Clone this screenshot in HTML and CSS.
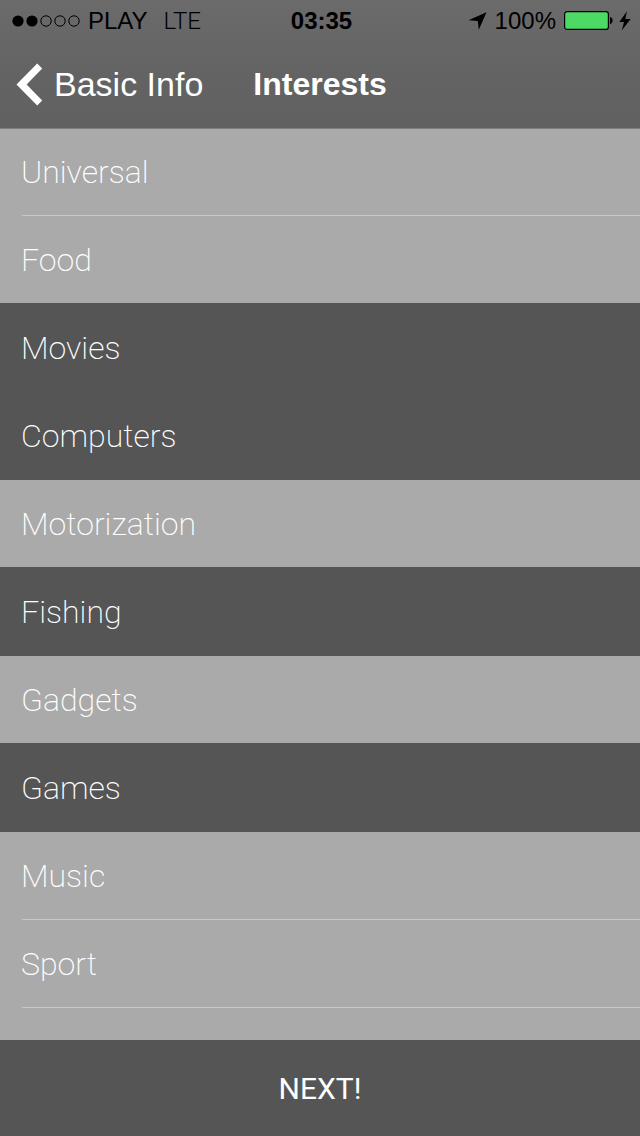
FILE: index.html
```html
<!DOCTYPE html>
<html lang="en">
<head>
    <meta charset="UTF-8">
    <meta name="viewport" content="width=device-width, initial-scale=1.0">
    <title>Interests</title>
    <link rel="stylesheet" href="styles.css">
</head>
<body>
    <header class="top">
        <div class="status-bar">
            <div class="status-left">
                <svg class="signal" width="68" height="12" viewBox="0 0 68 12" aria-hidden="true">
                    <circle cx="6" cy="6" r="5.6"/>
                    <circle cx="20" cy="6" r="5.6"/>
                    <g fill="none" stroke="#000">
                        <circle cx="34" cy="6" r="5.2"/>
                        <circle cx="48" cy="6" r="5.2"/>
                        <circle cx="62" cy="6" r="5.2"/>
                    </g>
                </svg>
                <span>PLAY</span>
                <span class="network">LTE</span>
            </div>
            <span class="clock">03:35</span>
            <div class="status-right">
                <svg class="location" width="19" height="18" viewBox="0 0 19 18" aria-hidden="true">
                    <path d="M18.5 0.3 L0.5 8.2 L9.8 9 L10.8 17.8 Z"/>
                </svg>
                <span>100%</span>
                <svg class="battery" width="49" height="19" viewBox="0 0 49 19" aria-hidden="true">
                    <rect x="0.6" y="0.6" width="43.8" height="17.8" rx="2.5" fill="#4cd964" stroke="#000" stroke-width="1.2"/>
                    <path d="M46 6 C49.5 6.5 49.5 12.5 46 13 Z"/>
                </svg>
                <svg class="bolt" width="12" height="20" viewBox="0 0 12 20" aria-hidden="true">
                    <path d="M8 0.3 L0.3 11 H5 L2.8 19.5 L11.6 8 H6.3 Z"/>
                </svg>
            </div>
        </div>
        <nav class="nav-bar">
            <a class="back" href="#">
                <svg width="27" height="44" viewBox="0 0 27 44" aria-hidden="true">
                    <path d="M0.5 21.5 L21.2 0.6 L26.2 5.4 L10.6 21.5 L26.2 37.6 L21.2 42.4 Z" fill="#fff"/>
                </svg>
                Basic Info
            </a>
            <h1>Interests</h1>
        </nav>
    </header>

    <main>
        <ul class="interests">
            <li><button type="button" aria-pressed="false">Universal</button></li>
            <li><button type="button" aria-pressed="false">Food</button></li>
            <li><button type="button" aria-pressed="true">Movies</button></li>
            <li><button type="button" aria-pressed="true">Computers</button></li>
            <li><button type="button" aria-pressed="false">Motorization</button></li>
            <li><button type="button" aria-pressed="true">Fishing</button></li>
            <li><button type="button" aria-pressed="false">Gadgets</button></li>
            <li><button type="button" aria-pressed="true">Games</button></li>
            <li><button type="button" aria-pressed="false">Music</button></li>
            <li><button type="button" aria-pressed="false">Sport</button></li>
        </ul>
    </main>

    <button type="button" class="next">NEXT!</button>

    <script>
        const rows = document.querySelectorAll('.interests button');

        rows.forEach(row => {
            row.addEventListener('click', () => {
                const selected = row.getAttribute('aria-pressed') === 'true';
                row.setAttribute('aria-pressed', String(!selected));
            });
        });
    </script>
</body>
</html>
```
FILE: styles.css
```css
* {
    box-sizing: border-box;
}

body {
    margin: 0;
    height: 100vh;
    display: flex;
    flex-direction: column;
    background: #aaa;
    color: #fff;
    font-family: "Liberation Sans", Arial, sans-serif;
}

button {
    border: 0;
    margin: 0;
    color: inherit;
    cursor: pointer;
}

.top {
    flex: none;
    background: linear-gradient(#6b6b6b, #636363 60%, #616161);
    border-bottom: 1px solid #808080;
}

.status-bar {
    display: grid;
    grid-template-columns: 1fr auto 1fr;
    align-items: center;
    height: 41px;
    padding: 0 9px 0 12px;
    color: #000;
    font-size: 24px;
}

.status-left,
.status-right {
    display: flex;
    align-items: center;
}

.status-left {
    gap: 8px;
}

.status-right {
    justify-content: flex-end;
    gap: 8px;
}

.network {
    margin-left: 8px;
    font-family: Roboto, sans-serif;
    font-weight: 300;
}

.clock {
    font-weight: bold;
}

.bolt {
    margin-left: -2px;
}

.nav-bar {
    display: grid;
    grid-template-columns: 1fr auto 1fr;
    align-items: center;
    height: 87px;
    padding: 0 16px;
}

.back {
    display: flex;
    align-items: center;
    gap: 11px;
    color: #fff;
    font-size: 34px;
    text-decoration: none;
}

h1 {
    margin: 0;
    font-size: 32px;
}

main {
    flex: 1;
    min-height: 0;
    overflow: hidden;
}

.interests {
    margin: 0;
    margin-top: -1px;
    padding: 0;
    list-style: none;
}

.interests button {
    display: block;
    width: 100%;
    height: 88px;
    padding: 0 21px;
    background: linear-gradient(#c8c8c8, #c8c8c8) 22px 100% / 100% 1px no-repeat;
    font-family: Roboto, sans-serif;
    font-size: 32px;
    font-weight: 200;
    text-align: left;
}

/* selected rows also cover the separator above them */
.interests button[aria-pressed="true"] {
    background: #555;
    box-shadow: 0 -1px 0 #555;
}

.next {
    flex: none;
    height: 96px;
    background: #555;
    font-family: Roboto, sans-serif;
    font-size: 30px;
}
```
